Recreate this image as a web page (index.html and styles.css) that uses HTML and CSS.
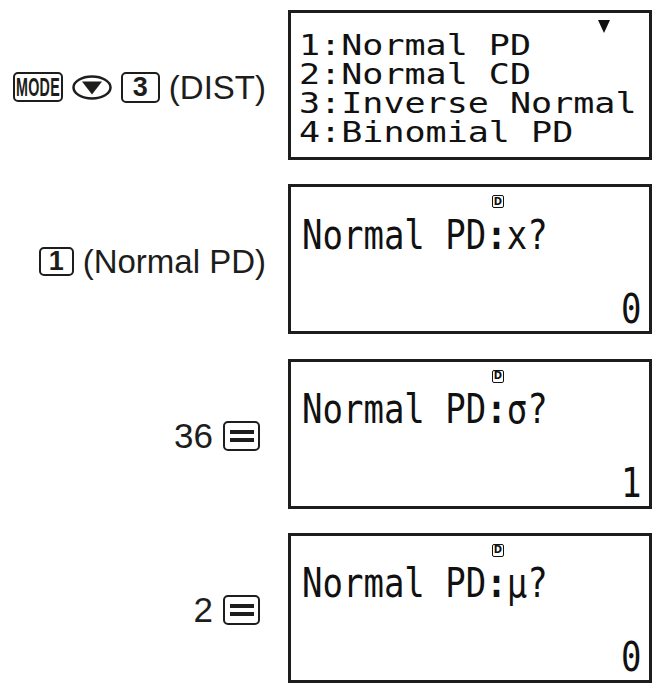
FILE: index.html
```html
<!DOCTYPE html>
<html lang="en">
<head>
<meta charset="utf-8">
<title>Normal PD</title>
<link rel="stylesheet" href="styles.css">
</head>
<body>
<div class="page">
  <div class="label">
    <span class="key key-mode"><span class="mode-txt">MODE</span></span>
    <svg class="key-down" width="40" height="25" viewBox="0 0 40 25"><ellipse cx="20" cy="12.5" rx="18.5" ry="11" fill="none" stroke="#1d1d1b" stroke-width="2.5"/><path d="M10 6.5 H30 L20 19.5 Z" fill="#1d1d1b"/></svg>
    <span class="key key-num">3</span>
    <span class="txt">(DIST)</span>
  </div>
  <div class="lcd menu">
    <div class="menu-arrow"><span class="tri"></span></div>
    <div class="menu-line">1:Normal PD</div>
    <div class="menu-line">2:Normal CD</div>
    <div class="menu-line">3:Inverse Normal</div>
    <div class="menu-line">4:Binomial PD</div>
  </div>

  <div class="label">
    <span class="key key-num key-one">1</span>
    <span class="txt">(Normal PD)</span>
  </div>
  <div class="lcd input">
    <div class="ind-row"><span class="ind">D</span></div>
    <div class="prompt">Normal PD<span class="colon">:</span>x?</div>
    <div class="value">0</div>
  </div>

  <div class="label label-eq">
    <span class="txt num">36</span>
    <span class="key key-eq"><span class="bar"></span><span class="bar"></span></span>
  </div>
  <div class="lcd input">
    <div class="ind-row"><span class="ind">D</span></div>
    <div class="prompt">Normal PD<span class="colon">:</span>σ?</div>
    <div class="value">1</div>
  </div>

  <div class="label label-eq">
    <span class="txt num">2</span>
    <span class="key key-eq"><span class="bar"></span><span class="bar"></span></span>
  </div>
  <div class="lcd input">
    <div class="ind-row"><span class="ind">D</span></div>
    <div class="prompt">Normal PD<span class="colon">:</span>μ?</div>
    <div class="value">0</div>
  </div>
</div>
</body>
</html>
```
FILE: styles.css
```css
html, body {
  margin: 0;
  padding: 0;
  background: #ffffff;
  color: #1d1d1b;
}

.page {
  display: grid;
  grid-template-columns: 266px 364px;
  grid-auto-rows: 150px;
  column-gap: 22px;
  row-gap: 24.33px;
  padding-top: 10px;
}

.label {
  display: flex;
  align-items: center;
  justify-content: flex-end;
  gap: 9px;
  padding-top: 4px;
  font-family: "Liberation Sans", Arial, sans-serif;
  font-size: 33px;
}

.label-eq {
  padding-right: 6px;
  gap: 10px;
}

.txt {
  line-height: 1;
}

.num {
  font-size: 35px;
}

.key {
  box-sizing: border-box;
  display: inline-flex;
  align-items: center;
  justify-content: center;
  border: 2.5px solid #1d1d1b;
  border-radius: 5px;
  height: 30px;
  font-family: "Liberation Sans", Arial, sans-serif;
  font-weight: bold;
}

.key-mode {
  width: 50px;
  overflow: visible;
}

.mode-txt {
  display: inline-block;
  font-size: 26px;
  line-height: 1;
  transform: scaleX(0.55);
  letter-spacing: 0.5px;
}

.key-down {
  display: block;
}

.key-num {
  width: 39px;
  height: 31px;
  font-size: 27px;
  line-height: 1;
}

.key-one {
  width: 35px;
  height: 29px;
}

.key-eq {
  width: 37px;
  height: 30px;
  flex-direction: column;
  gap: 4px;
}

.bar {
  display: block;
  width: 24px;
  height: 4px;
  background: #1d1d1b;
}

.lcd {
  box-sizing: border-box;
  border: 3px solid #1d1d1b;
  height: 150px;
  color: #111111;
}

.menu {
  padding: 0 0 0 8px;
  font-family: "DejaVu Sans Mono", monospace;
  font-size: 24px;
}

.menu-arrow {
  height: 21.7px;
  display: flex;
  justify-content: flex-end;
  align-items: flex-start;
  padding-right: 39px;
  box-sizing: border-box;
  padding-top: 7px;
}

.tri {
  display: block;
  width: 0;
  height: 0;
  border-left: 6.5px solid transparent;
  border-right: 6.5px solid transparent;
  border-top: 13px solid #111111;
}

.menu-line {
  width: max-content;
  line-height: 24px;
  height: 24px;
  margin-bottom: 5px;
  white-space: pre;
  transform: scale(1.46, 1.17);
  transform-origin: 0 20.3px;
}

.colon {
  font-weight: bold;
}

.input {
  display: flex;
  flex-direction: column;
  padding: 0 0 3.8px 0;
  font-family: "DejaVu Sans Mono", monospace;
  font-size: 34px;
}

.ind-row {
  margin-top: 8px;
  height: 13px;
  padding-left: 201px;
  display: flex;
}

.ind {
  box-sizing: border-box;
  display: inline-flex;
  align-items: center;
  justify-content: center;
  width: 12px;
  height: 13px;
  border: 1.8px solid #111111;
  border-radius: 2px;
  font-family: "DejaVu Sans", sans-serif;
  font-weight: bold;
  font-size: 10px;
  line-height: 1;
  letter-spacing: 0;
}

.prompt {
  margin-top: 11.2px;
  padding-left: 11px;
  line-height: 34px;
  height: 34px;
  white-space: pre;
  transform: scaleY(1.21);
  transform-origin: 0 28.8px;
}

.value {
  margin-top: auto;
  padding-right: 7.5px;
  text-align: right;
  line-height: 34px;
  height: 34px;
  transform: scaleY(1.21);
  transform-origin: 0 28.8px;
}
```
